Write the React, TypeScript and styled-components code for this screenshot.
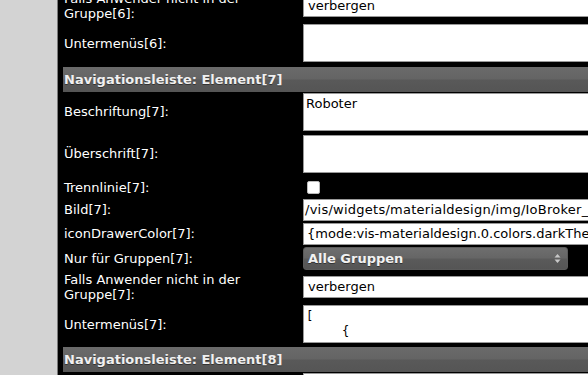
import React from "react";
import styled, { createGlobalStyle } from "styled-components";

const Global = createGlobalStyle`
  html, body { margin: 0; padding: 0; }
  body {
    width: 588px;
    height: 375px;
    overflow: hidden;
    background: #000;
    font-family: "DejaVu Sans", Verdana, sans-serif;
    font-size: 13px;
  }
`;

const Page = styled.div`
  display: flex;
  width: 588px;
  height: 375px;
  overflow: hidden;
`;

const SideStrip = styled.div`
  width: 57px;
  flex: none;
  background: #d3d3d3;
  border-right: 1px solid #7a7a7a;
`;

const Panel = styled.div`
  flex: 1;
  min-width: 0;
  background: #000;
  padding-left: 5px;
  overflow: hidden;
`;

const Scroller = styled.div`
  margin-top: -10px;
  width: 700px;
`;

const Row = styled.div<{ $h: number }>`
  display: grid;
  grid-template-columns: 240px 1fr;
  align-items: center;
  height: ${(p) => p.$h}px;
`;

const Label = styled.div`
  color: #fff;
  padding-left: 1px;
  line-height: 15px;
  padding-right: 16px;
`;

const HeaderRow = styled.div`
  display: flex;
  align-items: flex-end;
  height: 27px;
`;

const HeaderBar = styled.div`
  width: 100%;
  height: 25px;
  display: flex;
  align-items: center;
  padding-left: 1px;
  background: linear-gradient(#6a6a6a 0%, #646464 48%, #595959 52%, #555 100%);
  color: #f0f0f0;
  font-weight: bold;
  text-shadow: 0 1px 0 #333;
`;

const TextInput = styled.div<{ $pad?: number; $spacing?: number }>`
  box-sizing: border-box;
  width: 420px;
  height: 22px;
  background: #fff;
  border: 1px solid #999;
  color: #000;
  padding: 0 ${(p) => p.$pad ?? 4}px;
  letter-spacing: ${(p) => p.$spacing ?? 0}px;
  line-height: 20px;
  white-space: nowrap;
  overflow: hidden;
`;

const TextArea = styled.div`
  box-sizing: border-box;
  width: 420px;
  height: 38px;
  background: #fff;
  border: 1px solid #999;
  color: #000;
  padding: 2px 2px;
  line-height: 15px;
  overflow: hidden;
`;

const CodeArea = styled(TextArea)`
  font-family: "DejaVu Sans Mono", "Liberation Mono", monospace;
  font-size: 12px;
  white-space: pre;
  padding: 3px 2px;
`;

const Check = styled.span`
  display: block;
  box-sizing: border-box;
  width: 13px;
  height: 13px;
  margin-left: 4px;
  background: #fff;
  border: 1px solid #bbb;
  border-radius: 2px;
`;

const Select = styled.div`
  box-sizing: border-box;
  width: 265px;
  height: 23px;
  display: flex;
  align-items: center;
  justify-content: space-between;
  padding: 0 6px 0 4px;
  border-radius: 3px;
  border: 1px solid #5a5a5a;
  background: linear-gradient(#6e6e6e 0%, #666 45%, #5a5a5a 55%, #555 100%);
  color: #f2f2f2;
  font-weight: bold;
  text-shadow: 0 1px 0 #333;
`;

const Arrows = styled.svg`
  width: 7px;
  height: 11px;
`;

type RowDef =
  | { kind: "input"; label: string; value: string; h: number; pad?: number; spacing?: number }
  | { kind: "area"; label: string; value: string; h: number }
  | { kind: "code"; label: string; value: string; h: number }
  | { kind: "check"; label: string; h: number }
  | { kind: "select"; label: string; value: string; h: number }
  | { kind: "header"; label: string };

const rows: RowDef[] = [
  { kind: "input", label: "Falls Anwender nicht in der Gruppe[6]:", value: "verbergen", h: 31 },
  { kind: "area", label: "Untermenüs[6]:", value: "", h: 44 },
  { kind: "header", label: "Navigationsleiste: Element[7]" },
  { kind: "area", label: "Beschriftung[7]:", value: "Roboter", h: 39 },
  { kind: "area", label: "Überschrift[7]:", value: "", h: 45 },
  { kind: "check", label: "Trennlinie[7]:", h: 22 },
  { kind: "input", label: "Bild[7]:", value: "/vis/widgets/materialdesign/img/IoBroker_Logo.png", h: 23, pad: 1, spacing: 0.25 },
  { kind: "input", label: "iconDrawerColor[7]:", value: "{mode:vis-materialdesign.0.colors.darkTheme}", h: 25, pad: 3 },
  { kind: "select", label: "Nur für Gruppen[7]:", value: "Alle Gruppen", h: 24 },
  { kind: "input", label: "Falls Anwender nicht in der Gruppe[7]:", value: "verbergen", h: 33 },
  { kind: "code", label: "Untermenüs[7]:", value: "[\n     {", h: 42 },
  { kind: "header", label: "Navigationsleiste: Element[8]" },
  { kind: "input", label: "Beschriftung[8]:", value: "", h: 23 },
];

export default function App() {
  return (
    <>
      <Global />
      <Page>
        <SideStrip />
        <Panel>
          <Scroller>
            {rows.map((r, i) => {
              if (r.kind === "header") {
                return (
                  <HeaderRow key={i}>
                    <HeaderBar>{r.label}</HeaderBar>
                  </HeaderRow>
                );
              }
              let field: React.ReactNode = null;
              if (r.kind === "input")
                field = (
                  <TextInput $pad={r.pad} $spacing={r.spacing}>
                    {r.value}
                  </TextInput>
                );
              if (r.kind === "area") field = <TextArea>{r.value}</TextArea>;
              if (r.kind === "code") field = <CodeArea>{r.value}</CodeArea>;
              if (r.kind === "check") field = <Check />;
              if (r.kind === "select")
                field = (
                  <Select>
                    <span>{r.value}</span>
                    <Arrows viewBox="0 0 7 11">
                      <path d="M3.5 1 L6.5 4.5 H0.5 Z" fill="#c8c8c8" />
                      <path d="M3.5 10 L6.5 6.5 H0.5 Z" fill="#c8c8c8" />
                    </Arrows>
                  </Select>
                );
              return (
                <Row key={i} $h={r.h}>
                  <Label>{r.label}</Label>
                  {field}
                </Row>
              );
            })}
          </Scroller>
        </Panel>
      </Page>
    </>
  );
}
